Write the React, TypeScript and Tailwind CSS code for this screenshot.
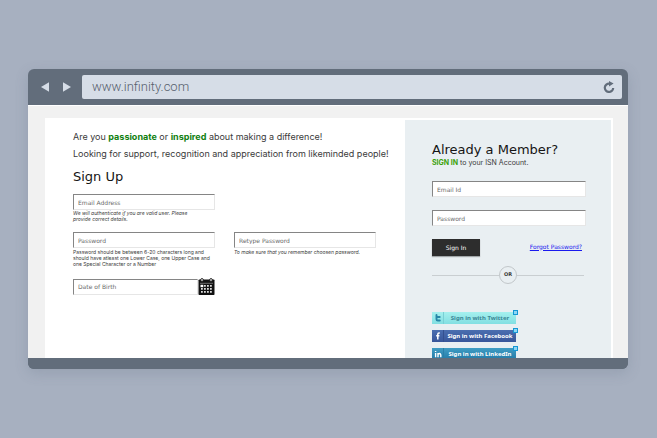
import React, { useState } from 'react';

interface FieldProps {
    id: string;
    label: string;
    type?: string;
    className?: string;
}

const Field: React.FC<FieldProps> = ({ id, label, type = 'text', className = '' }) => (
    <input
        id={id}
        type={type}
        aria-label={label}
        placeholder={label}
        className={`block w-full h-4 px-1 bg-white border border-t-[#858585] border-l-[#858585] border-r-[#e6e6e6] border-b-[#e6e6e6] font-['DejaVu_Sans',sans-serif] text-[6px] leading-3 text-[#444] placeholder:text-[#6a6a6a] placeholder:opacity-100 outline-none ${className}`}
    />
);

const CalendarIcon: React.FC = () => (
    <svg viewBox="0 0 17 17" className="w-[17px] h-[17px]" aria-hidden="true">
        <rect x="0.5" y="1.5" width="16" height="15.5" rx="0.8" fill="#111" />
        <path d="M2 5.3h13" stroke="#aaa" strokeWidth="0.6" />
        <path d="M2.5 6.8h2.8v2.4H2.5z" fill="#fff" />
        <g fill="#ddd">
            <path d="M6 7h1.8v1.8H6zM9 7h1.8v1.8H9zM12 7h1.8v1.8H12z" />
            <path d="M3 10h1.8v1.8H3zM6 10h1.8v1.8H6zM9 10h1.8v1.8H9zM12 10h1.8v1.8H12z" />
            <path d="M3 13h1.8v1.8H3zM6 13h1.8v1.8H6zM9 13h1.8v1.8H9zM12 13h1.8v1.8H12z" />
        </g>
        <circle cx="4" cy="2" r="1.4" fill="#fff" stroke="#111" strokeWidth="0.9" />
        <circle cx="13" cy="2" r="1.4" fill="#fff" stroke="#111" strokeWidth="0.9" />
    </svg>
);

const ReloadIcon: React.FC = () => (
    <svg viewBox="0 0 12 12" className="w-3 h-3" aria-hidden="true">
        <path d="M10.2 7A4.2 4.2 0 1 1 6.4 2.6" fill="none" stroke="#626d7b" strokeWidth="2.2" />
        <path d="M6 0 10.6 2.6 6 5.6z" fill="#626d7b" />
    </svg>
);

const socials = [
    {
        name: 'Twitter',
        box: 'from-[#a5f0ee] to-[#82dfe2] text-[#3c8796]',
        divider: 'border-[#79d0d5]',
        icon: <path d="M2.5 1v4.2q0 1.3 1.3 1.3h2M2.5 3h3.2" fill="none" stroke="#2687a8" strokeWidth="1.9" strokeLinecap="round" />,
    },
    {
        name: 'Facebook',
        box: 'from-[#4a6eb0] to-[#38569a] text-white',
        divider: 'border-[#34508f]',
        icon: <path d="M5.8 1H5Q3.8 1 3.8 2.3V7.5M2.2 3.7h3.2" fill="none" stroke="#fff" strokeWidth="1.5" />,
    },
    {
        name: 'LinkedIn',
        box: 'from-[#3f9dc4] to-[#2379a6] text-white',
        divider: 'border-[#2a7fa8]',
        icon: <path d="M1.6 3v4.3M1.6 1v1.1M4 3v4.3M4 4.6Q4.3 3.5 5.4 3.5T6.8 5v2.3" fill="none" stroke="#fff" strokeWidth="1.4" />,
    },
];

const App: React.FC = () => {
    const [url, setUrl] = useState('www.infinity.com');

    return (
        <div className="flex h-screen bg-[#a7b0c0] py-[69px] pl-7 pr-[29px] font-['DejaVu_Sans',sans-serif] text-[#3a3a3a]">
            <div className="flex flex-1 min-w-0 flex-col overflow-hidden rounded-md bg-[#626d7b] shadow-[0_4px_14px_rgba(80,95,115,0.2)]">
                <header className="flex h-9 shrink-0 items-center pl-3 pr-1.5">
                    <button aria-label="Back" className="mr-3">
                        <svg viewBox="0 0 10 10" className="w-2.5 h-2.5"><path d="M9 0.3v9.4L1 5z" fill="#d6dde7" /></svg>
                    </button>
                    <button aria-label="Forward" className="mr-2.5">
                        <svg viewBox="0 0 10 10" className="w-2.5 h-2.5"><path d="M1 0.3v9.4L9 5z" fill="#d6dde7" /></svg>
                    </button>
                    <div className="flex h-6 flex-1 items-center rounded-xs bg-[#d6dde7] pl-2.5 pr-[7px]">
                        <input
                            aria-label="Address"
                            value={url}
                            onChange={e => setUrl(e.target.value)}
                            className="min-w-0 flex-1 bg-transparent font-[Roboto,sans-serif] text-[13px] font-light leading-5 text-[#56606d] outline-none"
                        />
                        <button aria-label="Reload"><ReloadIcon /></button>
                    </div>
                </header>

                <main className="flex min-h-0 flex-1 overflow-hidden border-t border-white bg-[#f1f1f1] pt-3 pl-[17px] pr-[15px]">
                    <section className="min-w-0 flex-1 bg-white pt-[13px] pl-7 pr-3 font-[Inter,sans-serif]">
                        <p className="whitespace-nowrap text-[9px] leading-3">
                            Are you <b className="text-[#108010]">passionate</b> or <b className="text-[#108010]">inspired</b> about making a difference!
                        </p>
                        <p className="mt-[5px] whitespace-nowrap text-[9px] leading-3">
                            Looking for support, recognition and appreciation from likeminded people!
                        </p>
                        <h1 className="mt-[7px] font-['DejaVu_Sans',sans-serif] text-[13px] leading-5 text-[#151515]">Sign Up</h1>

                        <form className="mt-[7px] grid max-w-[303px] grid-cols-2 gap-x-[19px]" onSubmit={e => e.preventDefault()}>
                            <div>
                                <Field id="email" label="Email Address" type="email" />
                                <p className="whitespace-nowrap text-[5px] leading-[6px] italic">
                                    We will authenticate if you are valid user. Please<br />provide correct details.
                                </p>
                            </div>
                            <div className="col-start-1 mt-2.5">
                                <Field id="new-password" label="Password" type="password" />
                                <p className="mt-px whitespace-nowrap text-[5px] leading-[6px]">
                                    Password should be between 6-20 characters long and<br />
                                    should have atleast one Lower Case, one Upper Case and<br />
                                    one Special Character or a Number
                                </p>
                            </div>
                            <div className="mt-2.5">
                                <Field id="retype-password" label="Retype Password" type="password" />
                                <p className="mt-px whitespace-nowrap text-[5px] leading-[6px] italic">
                                    To make sure that you remember choosen password.
                                </p>
                            </div>
                            <div className="mt-[11px] flex items-center">
                                <Field id="birth" label="Date of Birth" />
                                <button type="button" aria-label="Choose date" className="shrink-0"><CalendarIcon /></button>
                            </div>
                        </form>
                    </section>

                    <aside className="w-52 shrink-0 border-2 border-l-0 border-b-0 border-white bg-[#e9eff2] pt-[21px] pl-[27px] pr-[25px]">
                        <h2 className="whitespace-nowrap text-[13px] leading-[18px] text-[#151515]">Already a Member?</h2>
                        <p className="font-[Inter,sans-serif] text-[7px] leading-2"><b className="text-[#3ba10c]">SIGN IN</b> to your ISN Account.</p>
                        <form onSubmit={e => e.preventDefault()}>
                            <Field id="email-id" label="Email Id" className="mt-3.5" />
                            <Field id="password" label="Password" type="password" className="mt-[13px]" />
                            <div className="mt-[13px] flex items-center justify-between pr-1">
                                <button className="h-[17px] w-12 bg-[#2d2d2d] text-[6px] text-white shadow-[0_1px_1px_rgba(0,0,0,0.3)]">Sign In</button>
                                <a href="#forgot" className="pb-0.5 text-[6px] leading-2 text-[#1a1aee] underline">Forgot Password?</a>
                            </div>
                        </form>
                        <div className="mt-2.5 mr-0.5 flex items-center">
                            <span className="h-px flex-1 bg-[#c9ced1]" />
                            <span className="flex h-[18px] w-[18px] items-center justify-center rounded-full border border-[#c2c7ca] text-[5px] font-bold">OR</span>
                            <span className="h-px flex-1 bg-[#c9ced1]" />
                        </div>
                        <div className="mt-7 flex w-[84px] flex-col gap-[6px]">
                            {socials.map(social => (
                                <button key={social.name} className={`relative flex h-3 w-full shrink-0 items-center bg-linear-to-b ${social.box}`}>
                                    <span className={`flex h-full w-3 items-center justify-center border-r ${social.divider}`}>
                                        <svg viewBox="0 0 8 8" className="h-2 w-2" aria-hidden="true">{social.icon}</svg>
                                    </span>
                                    <span className="flex-1 whitespace-nowrap text-center font-['Noto_Sans',sans-serif] text-[6px] font-bold">Sign in with {social.name}</span>
                                    <span className="absolute -top-0.5 -right-0.5 h-[5px] w-[5px] border border-[#1597d4] bg-[#8fd6f5]" />
                                </button>
                            ))}
                        </div>
                    </aside>
                </main>
                <footer className="h-[11px] shrink-0 bg-[#626d7b]" />
            </div>
        </div>
    );
};

export default App;
